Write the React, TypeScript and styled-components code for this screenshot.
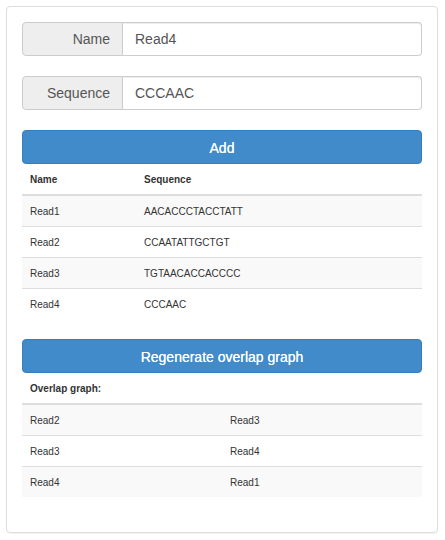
import React from "react";
import styled, { createGlobalStyle } from "styled-components";

const Global = createGlobalStyle`
  html, body { margin: 0; padding: 0; background: #fff; }
  body { font-family: "Liberation Sans", Arial, sans-serif; color: #333; }
  * { box-sizing: border-box; }
`;

const Page = styled.div`
  padding: 6px 7px 8px 6px;
`;

const Panel = styled.div`
  border: 1px solid #ddd;
  border-radius: 4px;
  padding: 15px 15px 35px 15px;
  box-shadow: 0 1px 1px rgba(0,0,0,0.05);
`;

const InputGroup = styled.div`
  display: flex;
  height: 34px;
  margin-bottom: 20px;
  font-size: 14px;
`;

const Addon = styled.span`
  width: 101px;
  flex: none;
  background: #eee;
  border: 1px solid #ccc;
  border-radius: 4px 0 0 4px;
  color: #555;
  display: flex;
  align-items: center;
  justify-content: flex-end;
  padding-right: 12px;
`;

const Input = styled.input`
  flex: 1;
  min-width: 0;
  border: 1px solid #ccc;
  border-left: none;
  border-radius: 0 4px 4px 0;
  padding: 0 12px;
  font: inherit;
  color: #555;
  box-shadow: inset 0 1px 1px rgba(0,0,0,0.075);
  outline: none;
`;

const Button = styled.button`
  display: block;
  width: 100%;
  height: 34px;
  background: #428bca;
  border: 1px solid #357ebd;
  border-radius: 4px;
  color: #fff;
  font-family: inherit;
  font-size: 14px;
  padding: 1px 0 0 0;
  margin: 0;
  text-shadow: 0 0 0.3px #fff;
`;

const Table = styled.table<{ $last?: boolean }>`
  width: 100%;
  border-collapse: collapse;
  font-size: 10px;
  line-height: 14px;
  margin-bottom: ${(p) => (p.$last ? "0" : "20px")};
`;

const Th = styled.th<{ $w?: string }>`
  text-align: left;
  font-weight: bold;
  padding: 9px 8px 7px;
  border-bottom: 2px solid #ddd;
  width: ${(p) => p.$w || "auto"};
`;

const Tr = styled.tr`
  &:nth-child(odd) td { background: #f9f9f9; }
  & + & td { border-top: 1px solid #ddd; }
`;

const Td = styled.td<{ $w?: string }>`
  padding: 9px 8px 7px;
  vertical-align: top;
  width: ${(p) => p.$w || "auto"};
`;

const reads = [
  ["Read1", "AACACCCTACCTATT"],
  ["Read2", "CCAATATTGCTGT"],
  ["Read3", "TGTAACACCACCCC"],
  ["Read4", "CCCAAC"],
];

const overlaps = [
  ["Read2", "Read3"],
  ["Read3", "Read4"],
  ["Read4", "Read1"],
];

export default function App() {
  return (
    <>
      <Global />
      <Page>
        <Panel>
          <InputGroup>
            <Addon>Name</Addon>
            <Input defaultValue="Read4" />
          </InputGroup>
          <InputGroup>
            <Addon>Sequence</Addon>
            <Input defaultValue="CCCAAC" />
          </InputGroup>
          <Button>Add</Button>
          <Table>
            <thead>
              <tr>
                <Th $w="114px">Name</Th>
                <Th>Sequence</Th>
              </tr>
            </thead>
            <tbody>
              {reads.map(([n, s]) => (
                <Tr key={n}>
                  <Td>{n}</Td>
                  <Td>{s}</Td>
                </Tr>
              ))}
            </tbody>
          </Table>
          <Button>Regenerate overlap graph</Button>
          <Table $last>
            <thead>
              <tr>
                <Th colSpan={2}>Overlap graph:</Th>
              </tr>
            </thead>
            <tbody>
              {overlaps.map(([a, b]) => (
                <Tr key={a}>
                  <Td $w="50%">{a}</Td>
                  <Td>{b}</Td>
                </Tr>
              ))}
            </tbody>
          </Table>
        </Panel>
      </Page>
    </>
  );
}
